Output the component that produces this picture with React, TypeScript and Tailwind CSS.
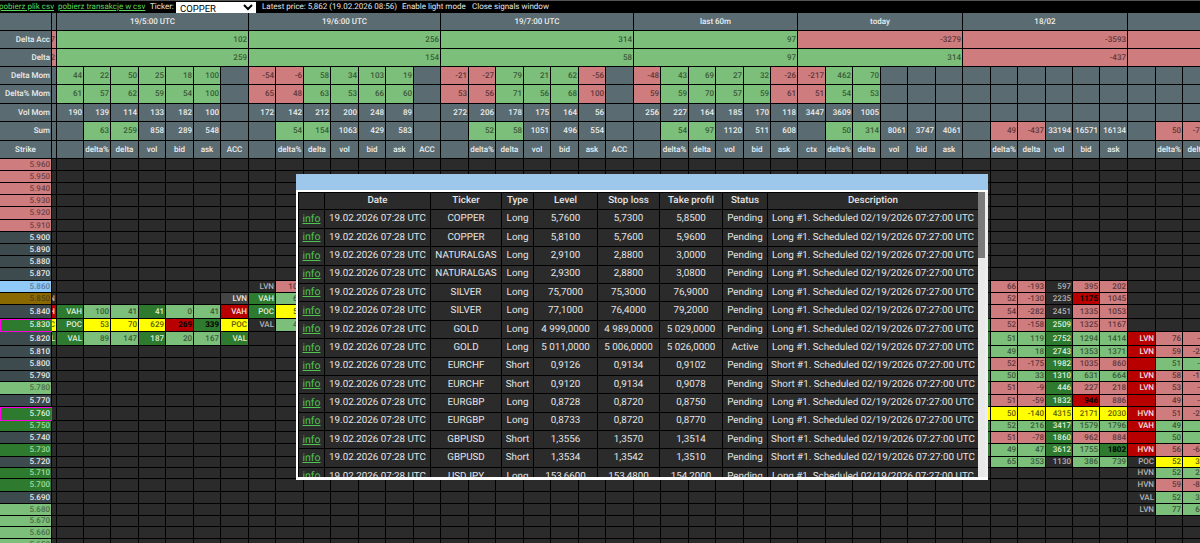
import React from "react";

const GRID =
  "grid grid-cols-[52px_5px_27px_27px_28px_27px_28px_27px_28px_27px_28px_27px_28px_27px_28px_27px_28px_27px_28px_27px_28px_27px_28px_27px_28px_27px_28px_27px_27px_28px_27px_28px_27px_28px_27px_28px_27px_28px_27px_27px_28px_28px_27px_28px]";

const COLORS: Record<string, string> = {
  h: "bg-[#5a6b71] text-[#eceeee] font-medium",
  g: "bg-[#7cbf7b] text-[#3a5a38] font-medium",
  r: "bg-[#cf7c7f] text-[#5e3839] font-medium",
  d: "bg-[#2b2b2b] text-[#b4b4b4] font-medium",
  G: "bg-[#2e7a2e] text-[#dcefdc] font-medium",
  R: "bg-[#b80000] text-[#f4e0e0] font-medium",
  B: "bg-[#b80000] text-black font-bold",
  K: "bg-[#2e7a2e] text-black font-bold",
  y: "bg-[#ffff00] text-[#5c5c00] font-medium",
  n: "bg-[#444444] text-[#e8e8e8] font-medium",
  s: "bg-[#3d4a4e] text-[#e6e8e8] font-medium",
  t: "bg-[#90caf9] text-[#5c7f9c] font-medium",
  o: "bg-[#8a6a00] text-[#4f4010] font-medium",
  sg: "bg-[#7cbf7b] text-[#4a6f48] font-medium",
  sr: "bg-[#cf7c7f] text-[#6b4446] font-medium",
  sG: "bg-[#2e7a2e] text-[#9fdc9f] font-medium",
};

type C = [string, string, number?, string?];

function Cell({ c }: { c: C }) {
  const [text, color, span, align] = c;
  const sp: Record<number, string> = { 3: "col-span-3", 6: "col-span-6", 7: "col-span-7" };
  return (
    <div
      className={`min-w-0 overflow-hidden whitespace-nowrap border-r border-b border-black flex items-center ${
        align === "c" ? "justify-center" : "justify-end pr-[1px]"
      } ${COLORS[color]} ${span ? sp[span] : ""}`}
    >
      {text}
    </div>
  );
}

const hs = (vals: string[]): C[] =>
  vals.map((v): C => (v.endsWith("!") ? [v.slice(0, -1), "r"] : v.endsWith("+") ? [v.slice(0, -1), "g"] : [v, "h"]));

const blank = (n: number): C[] => Array.from({ length: n }, (): C => ["", "h"]);

const headerRows: { h: string; cells: C[] }[] = [
  {
    h: "h-[18px]",
    cells: [
      ["", "h"],
      ["", "h"],
      ["19/5:00 UTC", "h", 7, "c"],
      ["19/6:00 UTC", "h", 7, "c"],
      ["19/7:00 UTC", "h", 7, "c"],
      ["last 60m", "h", 6, "c"],
      ["today", "h", 6, "c"],
      ["18/02", "h", 6, "c"],
      ["", "h", 3],
    ],
  },
  {
    h: "h-[18px]",
    cells: [
      ["Delta Acc", "h"],
      ["7", "r"],
      ["102", "g", 7],
      ["256", "g", 7],
      ["314", "g", 7],
      ["97", "g", 6],
      ["-3279", "r", 6],
      ["-3593", "r", 6],
      ["", "r", 3],
    ],
  },
  {
    h: "h-[18px]",
    cells: [
      ["Delta", "h"],
      ["2", "r"],
      ["259", "g", 7],
      ["154", "g", 7],
      ["58", "g", 7],
      ["97", "g", 6],
      ["314", "g", 6],
      ["-437", "r", 6],
      ["", "r", 3],
    ],
  },
  {
    h: "h-[18px]",
    cells: [
      ["Delta Mom", "h"],
      ["", "h"],
      ...hs(["44+", "22+", "50+", "25+", "18+", "100+", ""]),
      ...hs(["-54!", "-6!", "58+", "34+", "103+", "19+", ""]),
      ...hs(["-21!", "-27!", "79+", "21+", "62+", "-56!", ""]),
      ...hs(["-48!", "43+", "69+", "27+", "32+", "-26!"]),
      ...hs(["-217!", "462+", "70+", "", "", ""]),
      ...blank(9),
    ],
  },
  {
    h: "h-[19px]",
    cells: [
      ["Delta% Mom", "h"],
      ["", "h"],
      ...hs(["61+", "57+", "62+", "59+", "54+", "100+", ""]),
      ...hs(["65!", "48!", "63+", "53+", "66+", "60+", ""]),
      ...hs(["53!", "56!", "71+", "56+", "68+", "100!", ""]),
      ...hs(["59!", "59+", "70+", "57+", "59+", "61!"]),
      ...hs(["51!", "54+", "53+", "", "", ""]),
      ...blank(9),
    ],
  },
  {
    h: "h-[18px]",
    cells: [
      ["Vol Mom", "h"],
      ["", "h"],
      ...hs(["190", "139", "114", "133", "182", "100", ""]),
      ...hs(["172", "142", "212", "200", "248", "89", ""]),
      ...hs(["272", "206", "178", "175", "164", "56", ""]),
      ...hs(["256", "227", "164", "185", "170", "118"]),
      ...hs(["3447", "3609", "1005", "", "", ""]),
      ...blank(9),
    ],
  },
  {
    h: "h-[19px]",
    cells: [
      ["Sum", "h"],
      ["", "h"],
      ...hs(["", "63+", "259+", "858", "289", "548", ""]),
      ...hs(["", "54+", "154+", "1063", "429", "583", ""]),
      ...hs(["", "52+", "58+", "1051", "496", "554", ""]),
      ...hs(["", "54+", "97+", "1120", "511", "608"]),
      ...hs(["", "50+", "314+", "8061", "3747", "4061"]),
      ...hs(["", "49!", "-437!", "33194", "16571", "16134"]),
      ...hs(["", "50!", "-786!"]),
    ],
  },
];

const headNames = ["delta%", "delta", "vol", "bid", "ask"];
const strikeHeader: C[] = [
  ["Strike", "h", undefined, "c"],
  ["", "h"],
  ...[
    ["", ...headNames, "ACC"],
    ["", ...headNames, "ACC"],
    ["", ...headNames, "ACC"],
    ["", ...headNames],
    ["ctx", ...headNames],
    ["", ...headNames],
    ["", "delta%", "delta"],
  ]
    .flat()
    .map((n): C => [n, "h", undefined, "c"]),
];

type Row = { p: string; s: string; h: string; m?: boolean; nar?: C; o?: Record<number, C> };

const vals = (start: number, list: string[]): Record<number, C> => {
  const out: Record<number, C> = {};
  list.forEach((item, i) => {
    const [text, color] = item.split(":");
    out[start + i] = [text, color];
  });
  return out;
};

const rows: Row[] = [
  { p: "5.960", s: "sr", h: "h-[12px]" },
  { p: "5.950", s: "sr", h: "h-[12px]" },
  { p: "5.940", s: "sr", h: "h-[12px]" },
  { p: "5.930", s: "sr", h: "h-[12px]" },
  { p: "5.920", s: "sr", h: "h-[13px]" },
  { p: "5.910", s: "sr", h: "h-[12px]" },
  { p: "5.900", s: "s", h: "h-[12px]" },
  { p: "5.890", s: "s", h: "h-[12px]" },
  { p: "5.880", s: "s", h: "h-[12px]" },
  { p: "5.870", s: "s", h: "h-[13px]" },
  {
    p: "5.860",
    s: "t",
    h: "h-[12px]",
    o: { 9: ["LVN", "d"], 10: ["108", "r"], ...vals(36, ["66:r", "-193:r", "597:d", "395:r", "202:r"]) },
  },
  {
    p: "5.850",
    s: "o",
    h: "h-[12px]",
    nar: ["N", "d"],
    o: { 8: ["LVN", "n"], 9: ["VAH", "G"], 10: ["62", "g"], ...vals(36, ["52:r", "-130:r", "2235:d", "1175:B", "1045:r"]) },
  },
  {
    p: "5.840",
    s: "s",
    h: "h-[14px]",
    nar: ["H", "R"],
    o: {
      ...vals(2, ["VAH:G", "100:g", "41:g", "41:G", "0:g", "41:g", "VAH:R", "POC:G", "52:y"]),
      ...vals(36, ["54:r", "-282:r", "2451:d", "1335:r", "1053:r"]),
    },
  },
  {
    p: "5.830",
    s: "G",
    h: "h-[13px]",
    m: true,
    nar: ["C", "y"],
    o: {
      ...vals(2, ["POC:G", "53:y", "70:y", "629:y", "269:B", "339:K", "POC:y", "VAL:d", "48:g"]),
      35: ["", "G"],
      ...vals(36, ["52:r", "-158:r", "2509:G", "1325:r", "1167:r"]),
    },
  },
  {
    p: "5.820",
    s: "s",
    h: "h-[14px]",
    nar: ["L", "G"],
    o: {
      ...vals(2, ["VAL:G", "89:g", "147:g", "187:G", "20:g", "167:g", "VAL:G"]),
      35: ["", "G"],
      ...vals(36, ["51:g", "119:g", "2752:G", "1294:g", "1414:g", "LVN:R", "76:r", "-66:r"]),
    },
  },
  { p: "5.810", s: "s", h: "h-[12px]", o: { 35: ["", "G"], ...vals(36, ["49:g", "18:g", "2743:G", "1353:g", "1371:g", "LVN:R", "59:r", "-210:r"]) } },
  { p: "5.800", s: "s", h: "h-[13px]", o: { 35: ["", "G"], ...vals(36, ["52:r", "-175:r", "1982:G", "1035:r", "860:r", ":R", "51:g", "-14:g"]) } },
  { p: "5.790", s: "s", h: "h-[11px]", o: { 35: ["", "G"], ...vals(36, ["50:g", "33:g", "1310:G", "631:g", "664:g", "LVN:R", "58:r", "-120:r"]) } },
  { p: "5.780", s: "sg", h: "h-[13px]", o: { 35: ["", "G"], ...vals(36, ["51:r", "-9:r", "446:G", "227:r", "218:r", "LVN:R", "53:r", "-14:r"]) } },
  { p: "5.770", s: "s", h: "h-[12px]", o: { 35: ["", "G"], ...vals(36, ["51:r", "-59:r", "1832:G", "946:B", "886:r", ":R", "49:r", "-13:r"]) } },
  { p: "5.760", s: "G", h: "h-[14px]", m: true, o: { 35: ["", "y"], ...vals(36, ["50:y", "-140:y", "4315:y", "2171:y", "2030:y", "HVN:R", "51:r", "-230:r"]) } },
  { p: "5.750", s: "sG", h: "h-[11px]", o: { 35: ["", "G"], ...vals(36, ["52:g", "216:g", "3417:G", "1579:g", "1796:g", "VAH:R", "49:g", "12:g"]) } },
  { p: "5.740", s: "s", h: "h-[12px]", o: { 35: ["", "G"], ...vals(36, ["51:r", "-78:r", "1860:G", "962:r", "884:r", ":R", "50:g", "15:g"]) } },
  { p: "5.730", s: "sG", h: "h-[13px]", o: { 35: ["", "G"], ...vals(36, ["49:g", "47:g", "3612:G", "1755:g", "1802:K", "HVN:R", "56:r", "-640:r"]) } },
  { p: "5.720", s: "s", h: "h-[11px]", o: { ...vals(36, ["65:g", "353:g", "1130:d", "386:g", "739:g", "POC:d", "52:y", "353:y"]) } },
  { p: "5.710", s: "sG", h: "h-[11px]", o: { ...vals(41, ["HVN:d", "52:g", "216:g"]) } },
  { p: "5.700", s: "sG", h: "h-[13px]", o: { ...vals(41, ["HVN:d", "59:r", "-842:r"]) } },
  { p: "5.690", s: "s", h: "h-[12px]", o: { ...vals(41, ["VAL:d", "52:g", "318:g"]) } },
  { p: "5.680", s: "sg", h: "h-[12px]", o: { ...vals(41, ["LVN:d", "77:g", "642:g"]) } },
  { p: "5.670", s: "sg", h: "h-[11px]" },
  { p: "5.660", s: "sg", h: "h-[12px]" },
  { p: "5.650", s: "sg", h: "h-[12px]" },
];

function StrikeRow({ r }: { r: Row }) {
  const cells: C[] = [];
  for (let i = 2; i < 44; i++) cells.push(r.o?.[i] ?? ["", "d"]);
  return (
    <div className={`${GRID} ${r.h}`}>
      <div
        className={`min-w-0 overflow-hidden flex items-center justify-end pr-[1px] border-r border-b border-black ${COLORS[r.s]} ${
          r.m ? "outline outline-1 -outline-offset-1 outline-[#ff00e0]" : ""
        }`}
      >
        {r.p}
      </div>
      <Cell c={r.nar ?? ["", "d"]} />
      {cells.map((c, i) => (
        <Cell key={i} c={c} />
      ))}
    </div>
  );
}

const L = "Long #1. Scheduled 02/19/2026 07:27:00 UTC";
const S = "Short #1. Scheduled 02/19/2026 07:27:00 UTC";
const signals: string[][] = [
  ["COPPER", "Long", "5,7600", "5,7300", "5,8500", "Pending", L],
  ["COPPER", "Long", "5,8100", "5,7600", "5,9600", "Pending", L],
  ["NATURALGAS", "Long", "2,9100", "2,8800", "3,0000", "Pending", L],
  ["NATURALGAS", "Long", "2,9300", "2,8800", "3,0800", "Pending", L],
  ["SILVER", "Long", "75,7000", "75,3000", "76,9000", "Pending", L],
  ["SILVER", "Long", "77,1000", "76,4000", "79,2000", "Pending", L],
  ["GOLD", "Long", "4 999,0000", "4 989,0000", "5 029,0000", "Pending", L],
  ["GOLD", "Long", "5 011,0000", "5 006,0000", "5 026,0000", "Active", L],
  ["EURCHF", "Short", "0,9126", "0,9134", "0,9102", "Pending", S],
  ["EURCHF", "Short", "0,9120", "0,9134", "0,9078", "Pending", S],
  ["EURGBP", "Long", "0,8728", "0,8720", "0,8750", "Pending", L],
  ["EURGBP", "Long", "0,8733", "0,8720", "0,8770", "Pending", L],
  ["GBPUSD", "Short", "1,3556", "1,3570", "1,3514", "Pending", S],
  ["GBPUSD", "Short", "1,3534", "1,3542", "1,3510", "Pending", S],
  ["USDJPY", "Long", "153,6600", "153,4800", "154,2000", "Pending", L],
];

const SIG_GRID = "grid grid-cols-[26px_106px_71px_32px_64px_62px_63px_45px_211px]";
const sigCell = "flex items-center justify-center whitespace-nowrap overflow-hidden border-r border-b border-black bg-[#2b2b2b]";

function SignalsWindow() {
  const heads = ["", "Date", "Ticker", "Type", "Level", "Stop loss", "Take profil", "Status", "Description"];
  return (
    <div className="absolute left-[296px] top-[174px] w-[692px] h-[306px] flex flex-col">
      <div className="h-4 shrink-0 bg-[#9dc8ec]" />
      <div className="flex-1 min-h-0 flex border-2 border-r-0 border-white border-b-[3px] overflow-hidden bg-white">
        <div className="w-[680px] shrink-0 overflow-hidden text-[9.8px] text-[#e4e4e4] border-l border-t border-black">
          <div className={`${SIG_GRID} h-[17.4px]`}>
            {heads.map((h, i) => (
              <div key={i} className={`${sigCell} font-medium`}>
                {h}
              </div>
            ))}
          </div>
          {signals.map((row, i) => (
            <div key={i} className={`${SIG_GRID} h-[18.4px]`}>
              <div className={sigCell}>
                <a className="text-[#4fc34f] underline text-[10.5px]">info</a>
              </div>
              <div className={sigCell}>19.02.2026 07:28 UTC</div>
              {row.map((v, j) => (
                <div key={j} className={sigCell}>
                  {v}
                </div>
              ))}
            </div>
          ))}
        </div>
        <div className="w-[7px] shrink-0 bg-[#e9e9e9]">
          <div className="h-[66px] bg-[#7b7b7b]" />
        </div>
        <div className="flex-1 bg-[#eeeeee]" />
      </div>
    </div>
  );
}

export default function App() {
  return (
    <div className="relative w-[1200px] h-[543px] overflow-hidden bg-[#2b2b2b] font-['Roboto',sans-serif] text-[8px] leading-none [text-rendering:geometricPrecision]">
      <div className="h-[13px] bg-black border-t border-[#555555] flex items-center text-[8px] text-[#e6e6e6] whitespace-nowrap">
        <a className="text-[#58d858] underline -ml-[1px] w-[59px] shrink-0">pobierz plik csv</a>
        <a className="text-[#58d858] underline w-[92px] shrink-0">pobierz transakcje w csv</a>
        <span className="w-[26px] shrink-0">Ticker:</span>
        <select className="w-[80px] h-[11px] bg-white text-black text-[9.5px] leading-none p-0 border-0 shrink-0">
          <option>COPPER</option>
        </select>
        <span className="ml-[6px] w-[140px] shrink-0">Latest price: 5,862 (19.02.2026 08:56)</span>
        <span className="w-[70px] shrink-0">Enable light mode</span>
        <span className="shrink-0">Close signals window</span>
      </div>
      <div className="w-[1211px]">
        {headerRows.map((r, i) => (
          <div key={i} className={`${GRID} ${r.h}`}>
            {r.cells.map((c, j) => (
              <Cell key={j} c={c} />
            ))}
          </div>
        ))}
        <div className={`${GRID} h-[18px]`}>
          {strikeHeader.map((c, j) => (
            <Cell key={j} c={c} />
          ))}
        </div>
        {rows.map((r) => (
          <StrikeRow key={r.p} r={r} />
        ))}
      </div>
      <SignalsWindow />
    </div>
  );
}
